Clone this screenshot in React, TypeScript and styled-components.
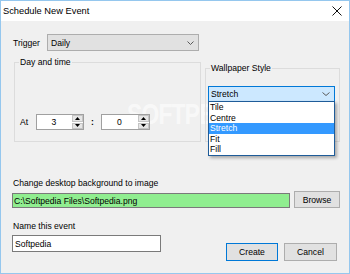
import * as React from 'react'
import styled, { createGlobalStyle } from 'styled-components'

const GlobalStyle = createGlobalStyle`
    html, body {
        margin: 0;
        padding: 0;
        background: #ffffff;
    }
    body {
        font-family: 'Liberation Sans', Arial, sans-serif;
        font-size: 8.6px;
        color: #000000;
    }
`

const styles = ['Tile', 'Centre', 'Stretch', 'Fit', 'Fill']

const Chevron = ({ w = 7 }: { w?: number }) => (
    <svg width={w} height="4" viewBox={`0 0 ${w} 4`}>
        <polyline points={`0.5,0.5 ${w / 2},3.5 ${w - 0.5},0.5`} fill="none" stroke="#5a5a5a" strokeWidth="1" />
    </svg>
)

const Spinner = ({ value, width }: { value: string; width: number }) => (
    <Spin style={{ width }}>
        <SpinText>{value}</SpinText>
        <SpinButtons>
            <SpinButton>
                <svg width="5" height="3" viewBox="0 0 5 3"><polygon points="0,3 2.5,0 5,3" fill="#000" /></svg>
            </SpinButton>
            <SpinButton>
                <svg width="5" height="3" viewBox="0 0 5 3"><polygon points="0,0 2.5,3 5,0" fill="#000" /></svg>
            </SpinButton>
        </SpinButtons>
    </Spin>
)

const App = () => (
    <>
        <GlobalStyle />
        <Window>
            <TitleBar>
                <Title>Schedule New Event</Title>
                <svg width="10" height="10" viewBox="0 0 10 10">
                    <path d="M0.5 0.5 L9.5 9.5 M9.5 0.5 L0.5 9.5" stroke="#111" strokeWidth="1" />
                </svg>
            </TitleBar>
            <Body>
                <TriggerRow>
                    <TriggerLabel>Trigger</TriggerLabel>
                    <Select>
                        <span>Daily</span>
                        <Chevron w={7} />
                    </Select>
                </TriggerRow>
                <Groups>
                    <Group $w={187} $h={85} $end>
                        <Legend>Day and time</Legend>
                        <AtRow>
                            <AtLabel>At</AtLabel>
                            <Spinner value="3" width={48} />
                            <Colon>:</Colon>
                            <Spinner value="0" width={49} />
                        </AtRow>
                    </Group>
                    <Group $w={135} $h={79}>
                        <Legend>Wallpaper Style</Legend>
                        <Combo>
                            <span>Stretch</span>
                            <Chevron w={8} />
                            <List>
                                {styles.map(s => (
                                    <Option key={s} $selected={s === 'Stretch'}>{s}</Option>
                                ))}
                            </List>
                        </Combo>
                    </Group>
                </Groups>
                <FieldLabel $top={35}>Change desktop background to image</FieldLabel>
                <PathRow>
                    <PathField>C:\Softpedia Files\Softpedia.png</PathField>
                    <Button $w={46} $h={17}>Browse</Button>
                </PathRow>
                <FieldLabel $top={12}>Name this event</FieldLabel>
                <NameRow>
                    <NameField>Softpedia</NameField>
                    <Actions>
                        <Button $w={52} $h={18} $primary>Create</Button>
                        <Button $w={53} $h={18}>Cancel</Button>
                    </Actions>
                </NameRow>
            </Body>
            <Watermark>SOFTPEDIA<sup>®</sup></Watermark>
        </Window>
    </>
)

const Window = styled.div`
    position: relative;
    width: 350px;
    height: 274px;
    box-sizing: border-box;
    border: 1px solid #95c7ee;
    display: flex;
    flex-direction: column;
    background: #f0f0f0;
    overflow: hidden;
`

const TitleBar = styled.div`
    height: 20px;
    flex: none;
    background: #ffffff;
    display: flex;
    align-items: center;
    justify-content: space-between;
    padding: 0 7px 0 2px;
`

const Title = styled.span`
    font-size: 9.3px;
    color: #000;
`

const Body = styled.div`
    position: relative;
    z-index: 2;
    flex: 1;
    display: flex;
    flex-direction: column;
    padding: 13px 9px 0 11px;
`

const TriggerRow = styled.div`
    display: flex;
    align-items: center;
    height: 17px;
`

const TriggerLabel = styled.span`
    width: 35px;
    padding-left: 1px;
    box-sizing: border-box;
`

const Select = styled.div`
    width: 152px;
    height: 17px;
    box-sizing: border-box;
    border: 1px solid #adadad;
    background: #e1e1e1;
    display: flex;
    align-items: center;
    justify-content: space-between;
    padding: 0 4px 0 3px;
`

const Groups = styled.div`
    display: flex;
    align-items: flex-end;
    gap: 4px;
    margin: 6px 0 0 2px;
`

const Group = styled.fieldset<{ $w: number; $h: number; $end?: boolean }>`
    margin: 0;
    padding: 0;
    min-width: 0;
    width: ${p => p.$w}px;
    height: ${p => p.$h}px;
    box-sizing: border-box;
    border: 1px solid #dcdcdc;
    display: flex;
    flex-direction: column;
    justify-content: ${p => (p.$end ? 'flex-end' : 'flex-start')};
`

const Legend = styled.legend`
    margin-left: 4px;
    padding: 0 1px;
    line-height: 10px;
`

const AtRow = styled.div`
    display: flex;
    align-items: center;
    padding-left: 5px;
    margin-bottom: 11px;
`

const AtLabel = styled.span`
    width: 16px;
`

const Colon = styled.span`
    width: 17px;
    text-align: center;
    font-weight: bold;
`

const Spin = styled.div`
    height: 16px;
    box-sizing: border-box;
    border: 1px solid #a0a0a0;
    background: #ffffff;
    display: flex;
`

const SpinText = styled.div`
    flex: 1;
    display: flex;
    align-items: center;
    justify-content: center;
`

const SpinButtons = styled.div`
    width: 11px;
    display: flex;
    flex-direction: column;
    gap: 1px;
    padding: 0 0 0 1px;
`

const SpinButton = styled.div`
    flex: 1;
    background: #e6e6e6;
    border: 1px solid #c4c4c4;
    display: flex;
    align-items: center;
    justify-content: center;
`

const Combo = styled.div`
    position: relative;
    margin: 13px 0 0 2px;
    width: 127px;
    height: 16px;
    box-sizing: border-box;
    border: 1px solid #0078d7;
    background: #cce8ff;
    display: flex;
    align-items: center;
    justify-content: space-between;
    padding: 0 4px 0 2px;
`

const List = styled.div`
    position: absolute;
    left: -1px;
    top: 14px;
    width: 127px;
    box-sizing: border-box;
    border: 1px solid #1f5c99;
    background: #ffffff;
    box-shadow: 2px 2px 3px rgba(0, 0, 0, 0.3);
    z-index: 2;
`

const Option = styled.div<{ $selected?: boolean }>`
    height: 10.6px;
    line-height: 10.6px;
    padding-left: 1px;
    background: ${p => (p.$selected ? '#3399ff' : 'transparent')};
    color: ${p => (p.$selected ? '#ffffff' : '#000000')};
`

const FieldLabel = styled.div<{ $top: number }>`
    margin-top: ${p => p.$top}px;
    line-height: 12px;
    padding-left: 1px;
`

const PathRow = styled.div`
    display: flex;
    align-items: flex-end;
    gap: 4px;
    margin-top: 2px;
`

const PathField = styled.div`
    width: 278px;
    height: 15px;
    box-sizing: border-box;
    border: 1px solid #7a7a7a;
    background: #90ee90;
    display: flex;
    align-items: center;
    padding-left: 1px;
`

const Button = styled.div<{ $w: number; $h: number; $primary?: boolean }>`
    width: ${p => p.$w}px;
    height: ${p => p.$h}px;
    box-sizing: border-box;
    border: 1px solid ${p => (p.$primary ? '#0078d7' : '#adadad')};
    background: #e1e1e1;
    display: flex;
    align-items: center;
    justify-content: center;
`

const NameRow = styled.div`
    display: flex;
    align-items: flex-start;
    margin-top: 3px;
`

const NameField = styled.div`
    width: 149px;
    height: 17px;
    box-sizing: border-box;
    border: 1px solid #7a7a7a;
    background: #ffffff;
    display: flex;
    align-items: center;
    padding-left: 2px;
`

const Actions = styled.div`
    display: flex;
    gap: 6px;
    margin: 8px 3px 0 auto;
`

const Watermark = styled.div`
    position: absolute;
    left: 126px;
    top: 96px;
    font-size: 30px;
    font-weight: bold;
    letter-spacing: -1px;
    color: rgba(255, 255, 255, 0.6);
    transform: scaleX(0.76);
    transform-origin: left top;
    pointer-events: none;
    z-index: 1;
    sup {
        font-size: 9px;
    }
`

export default App
